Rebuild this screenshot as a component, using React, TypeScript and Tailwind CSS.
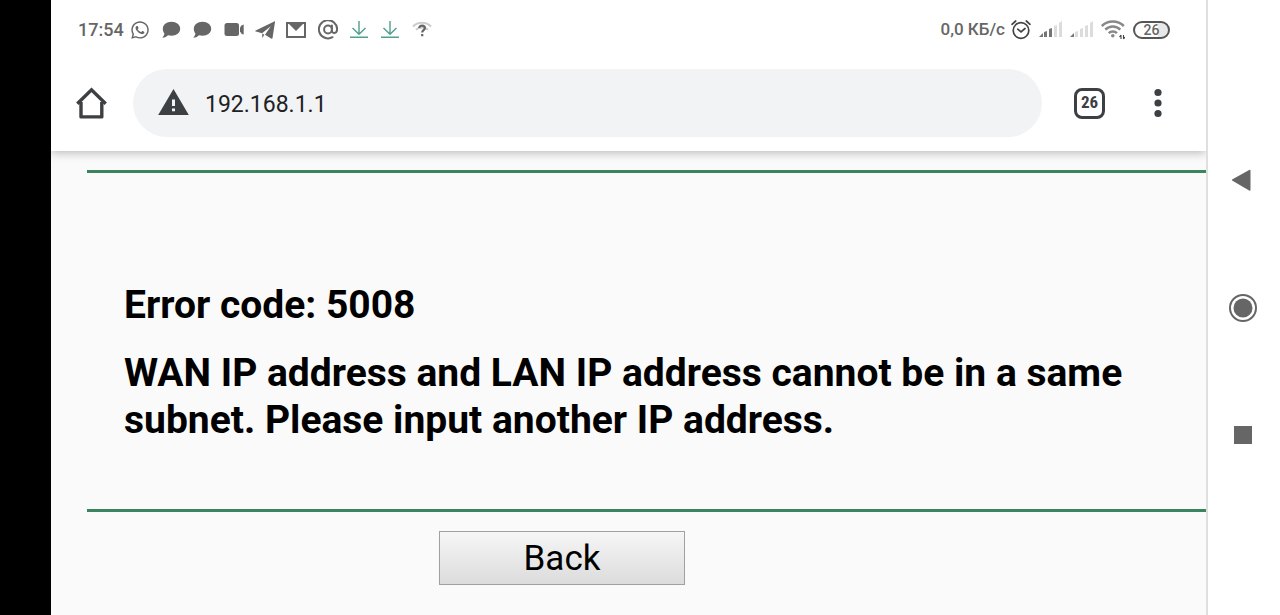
import React from 'react';
import { FaWhatsapp } from 'react-icons/fa';

const ChatIcon = () => (
  <svg className="w-5 h-5" viewBox="0 0 20 20" fill="#666">
    <path d="M10.5 1.8c5 0 8.7 2.9 8.7 6.9s-3.7 7-8.7 7c-1.2 0-2.300-.2-3.400-.5-1.300 1.200-3.100 2.300-5.900 2.500 1.200-1.200 2-2.600 2.200-4.300C2.300 12.200 1.800 10.600 1.800 8.700c0-4 3.700-6.900 8.700-6.900z" />
  </svg>
);

const VideoIcon = () => (
  <svg className="w-5 h-5" viewBox="0 0 20 20" fill="#666">
    <rect x="0.5" y="3" width="14.5" height="13" rx="2.5" />
    <path d="M16 7.5Q17 5 19.700 4.500v10Q17 14 16 11.500z" />
  </svg>
);

const TelegramIcon = () => (
  <svg className="w-5 h-5" viewBox="0 0 20 20" fill="#666">
    <path d="M0.2 10.8 19.2 1.400c.6-.3.9 0 .8.6L17.500 18c-.2.900-.8 1-1.400.6L10 14.800 15.800 6.200 7 13.200 1 11.600c-.8-.2-.9-.5-.8-.8z" />
    <path d="M7.2 13.5 9.400 14.800 7.300 18z" />
  </svg>
);

const MailIcon = () => (
  <svg className="w-5 h-5" viewBox="0 0 20 20" fill="none" stroke="#666" strokeWidth="2">
    <rect x="1" y="3" width="18" height="14" />
    <path d="M2.5 3.5 10 11 17.5 3.500z" fill="#666" stroke="none" />
  </svg>
);

const AtIcon = () => (
  <svg className="w-5 h-5" viewBox="0 0 20 20" fill="none" stroke="#666" strokeWidth="2" strokeLinecap="round">
    <circle cx="10" cy="9.5" r="3.9" />
    <path d="M13.9 5.6v5.200c0 3.200 5.200 3.100 5.200-1.300A9.100 9.100 0 1 0 14.500 17.200" />
  </svg>
);

const DownloadIcon = () => (
  <svg className="w-5 h-5" viewBox="0 0 20 20" fill="none" stroke="#4fa08c" strokeWidth="1.4">
    <path d="M10 1v13M3.500 8l6.500 6.300L16.500 8M1 17.300h18" />
  </svg>
);

const WifiUnknownIcon = () => (
  <svg className="w-5 h-5" viewBox="0 0 20 20" fill="none" strokeWidth="2.2">
    <path d="M1 6.5c5-5 13-5 18 0M4 9.800c3.200-3.200 8.800-3.200 12 0" stroke="#ccc" />
    <path d="M7.3 8c0-3.400 5.600-3.200 5.600.1 0 2-2.700 2.100-2.700 4.300M10.200 14v2.200" stroke="#666" />
  </svg>
);

const AlarmIcon = () => (
  <svg className="w-5 h-5" viewBox="0 0 20 20" fill="none" stroke="#444" strokeWidth="1.7" strokeLinecap="round">
    <circle cx="10" cy="10.5" r="7.800" />
    <path d="M6.7 9.200 10 12l4-3.500M1 4.300 4.700 1M19 4.300 15.300 1" />
  </svg>
);

// Slanted tops: each bar is cut from one rising wedge
const BARS = [
  '0,17 4,13 4,17',
  '5,12 8,11 8,17 5,17',
  '10,9 13,8 13,17 10,17',
  '15,6 18,5 18,17 15,17',
  '20,3 23,1 23,17 20,17',
];

const SignalIcon = ({ level }: { level: number }) => (
  <svg className="w-[23px] h-5" viewBox="0 0 23 20">
    {BARS.map((points, i) => (
      <polygon key={points} points={points} fill={i < level ? '#757575' : '#dcdcdc'} />
    ))}
  </svg>
);

const WifiIcon = () => (
  <svg className="w-6 h-5" viewBox="0 0 24 20" fill="none" stroke="#888" strokeWidth="2.5">
    <path d="M.8 6c6-6 16-6 22 0M4.300 9.600c4.200-4.200 10.800-4.200 15 0M7.700 13.200c2.300-2.300 5.900-2.300 8.200 0" />
    <circle cx="11.8" cy="15.8" r="1.800" fill="#888" stroke="none" />
    <path d="M20 15v4M18.500 17 20 15M22.500 15v4M24 17l-1.500 2" stroke="#444" strokeWidth="1.1" />
  </svg>
);

const HomeIcon = () => (
  <svg className="w-8 h-8" viewBox="0 0 32 32" fill="none" stroke="#3c4043" strokeWidth="3.4" strokeLinejoin="round">
    <path d="M1.300 16.800 15.500 2.800l14.200 14" strokeLinejoin="miter" />
    <path d="M5 15v14.900h20.800V15" />
  </svg>
);

const WarningIcon = () => (
  <svg className="w-8 h-7" viewBox="0 0 32 28">
    <path d="M16.500 0 31.800 26H1.200z" fill="#3c4043" />
    <path d="M15 10.500h3v6.500h-3zM15 19.500h3v2.800h-3z" fill="#f1f3f4" />
  </svg>
);

const StatusBar = () => (
  <div className="flex h-[60px] items-center justify-between pl-[27px] pr-9 font-medium text-[#666]">
    <div className="flex items-center gap-[6px]">
      <span className="text-lg">17:54</span>
      <div className="flex w-[302px] items-center justify-between">
        <FaWhatsapp className="w-5 h-5" />
        <ChatIcon />
        <ChatIcon />
        <VideoIcon />
        <TelegramIcon />
        <MailIcon />
        <AtIcon />
        <DownloadIcon />
        <DownloadIcon />
        <WifiUnknownIcon />
      </div>
    </div>
    <div className="flex items-center gap-2">
      <div className="flex items-center gap-[6px]">
        <span className="text-[17px]">0,0 КБ/с</span>
        <AlarmIcon />
      </div>
      <SignalIcon level={3} />
      <SignalIcon level={1} />
      <WifiIcon />
      <span className="flex h-[18px] w-[37px] items-center justify-center rounded-full border-2 border-[#555] bg-linear-to-r from-white from-70% to-[#e8e8e8] to-70% text-sm">
        26
      </span>
    </div>
  </div>
);

const Toolbar = () => (
  <div className="flex items-center pl-[25px] pr-8 pt-[9px] pb-[14px]">
    <button type="button" aria-label="Home">
      <HomeIcon />
    </button>
    <label className="ml-[25px] mr-8 flex h-[68px] flex-1 items-center gap-4 rounded-full bg-[#f1f3f4] px-6">
      <WarningIcon />
      <input
        type="text"
        aria-label="Address"
        defaultValue="192.168.1.1"
        className="min-w-0 flex-1 bg-transparent pt-1 text-[23px] text-[#202124] outline-none"
      />
    </label>
    <button
      type="button"
      aria-label="Tabs"
      className="flex h-[31px] w-[31px] items-center justify-center rounded-lg border-3 border-[#3c4043] font-['Roboto_Condensed','Roboto',sans-serif] text-[17px] font-bold text-[#3c4043]"
    >
      26
    </button>
    <button type="button" aria-label="Menu" className="ml-[37px]">
      <svg className="w-8 h-8" viewBox="0 0 32 32" fill="#3c4043">
        <circle cx="16" cy="5.5" r="3.6" />
        <circle cx="16" cy="16" r="3.6" />
        <circle cx="16" cy="26.5" r="3.6" />
      </svg>
    </button>
  </div>
);

const ErrorPage = () => (
  <main className="flex-1 bg-[#fafafa] pl-9 pt-[19px] text-black">
    <section className="border-y-3 border-[#3a8560] pl-[37px] pt-[109px] pb-[65px]">
      <h1 className="text-[39px] leading-[47px] font-bold">Error code: 5008</h1>
      <p className="mt-[21px] max-w-[1040px] text-[39px] leading-[47px] font-bold">
        WAN IP address and LAN IP address cannot be in a same subnet. Please input another IP address.
      </p>
    </section>
    <button
      type="button"
      className="mt-[19px] ml-[352px] h-[54px] w-[246px] border border-[#a0a0a0] bg-linear-to-b from-[#f6f6f6] to-[#dcdcdc] text-[35px] leading-[47px]"
    >
      Back
    </button>
  </main>
);

const SystemNav = () => (
  <nav className="relative flex w-[74px] flex-col items-center gap-[99px] border-l-2 border-[#dfdfdf] bg-white pt-[167px] pr-0.5">
    <button type="button" aria-label="Back">
      <svg className="w-7 h-7" viewBox="0 0 28 28" fill="#666">
        <path d="M3.500 12.200 20.200 2.900q1.300-.6 1.300.8v19q0 1.400-1.300.8L3.500 13.800q-1.300-.8 0-1.600z" />
      </svg>
    </button>
    <button type="button" aria-label="Home screen">
      <svg className="w-7 h-7" viewBox="0 0 28 28">
        <circle cx="14" cy="14" r="13" fill="none" stroke="#666" strokeWidth="2" />
        <circle cx="14" cy="14" r="9.5" fill="#666" />
      </svg>
    </button>
    <button type="button" aria-label="Recent apps">
      <svg className="w-7 h-7" viewBox="0 0 28 28" fill="#666">
        <rect x="5" y="5" width="18" height="18" />
      </svg>
    </button>
  </nav>
);

export default function App() {
  return (
    <div className="flex min-h-screen bg-black font-['Roboto',sans-serif]">
      <div className="flex flex-1 flex-col pl-[51px]">
        <header className="relative bg-white shadow-[0_1px_10px_rgba(0,0,0,0.3)]">
          <StatusBar />
          <Toolbar />
        </header>
        <ErrorPage />
      </div>
      <SystemNav />
    </div>
  );
}
